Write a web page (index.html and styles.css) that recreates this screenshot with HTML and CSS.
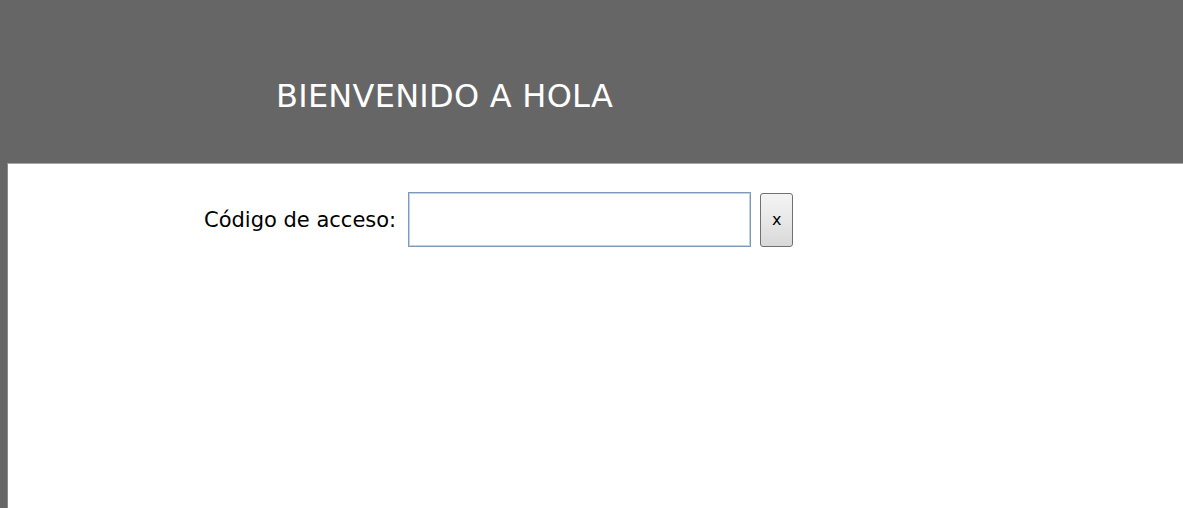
FILE: index.html
```html
<!DOCTYPE html>
<html lang="es">
<head>
<meta charset="utf-8">
<title>Bienvenido a Hola</title>
<link rel="stylesheet" href="styles.css">
</head>
<body>
<header class="top">
  <h1 class="title">BIENVENIDO A HOLA</h1>
</header>
<main class="content">
  <form class="access">
    <label class="access-label" for="code">Código de acceso:</label>
    <input class="access-input" id="code" type="text">
    <button class="access-btn" type="button">x</button>
  </form>
</main>
</body>
</html>
```

FILE: styles.css
```css
html, body {
  margin: 0;
  padding: 0;
  height: 100%;
}
body {
  background: #666666;
  font-family: "DejaVu Sans", sans-serif;
  display: flex;
  flex-direction: column;
  overflow: hidden;
}
.top {
  height: 163px;
  display: flex;
  align-items: center;
  padding-left: 276px;
  box-sizing: border-box;
}
.title {
  margin: 0;
  margin-top: 28px;
  color: #ffffff;
  font-weight: normal;
  font-size: 32px;
  letter-spacing: 0.25px;
}
.content {
  flex: 1;
  background: #ffffff;
  border-top: 1px solid #a6a6a6;
  border-left: 1px solid #8a8a8a;
  margin-left: 7px;
}
.access {
  display: flex;
  align-items: center;
  padding-top: 28px;
  padding-left: 196px;
}
.access-label {
  font-size: 21px;
  color: #000;
  margin-right: 12px;
}
.access-input {
  width: 343px;
  height: 55px;
  box-sizing: border-box;
  border: 1px solid #7d9abb;
  box-shadow: inset 0 0 0 1px #c3d2e3;
  background: #fff;
  outline: none;
  padding: 0;
  margin: 0 9px 0 0;
}
.access-btn {
  width: 33px;
  height: 54px;
  box-sizing: border-box;
  border: 1px solid #707070;
  border-radius: 3px;
  background: linear-gradient(#f4f4f4, #e8e8e8 50%, #d8d8d8);
  font-family: "DejaVu Sans", sans-serif;
  font-size: 16px;
  color: #000;
  padding: 0;
  margin: 0;
}
```
